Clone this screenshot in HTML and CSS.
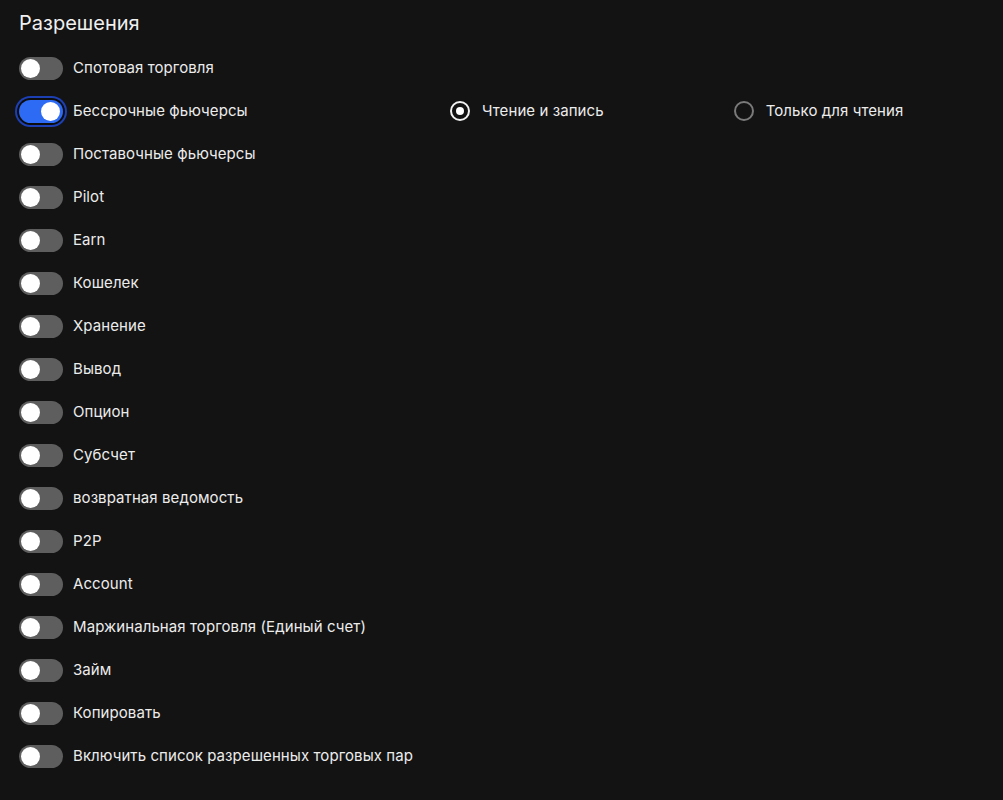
FILE: index.html
```html
<!DOCTYPE html>
<html lang="ru">
<head>
<meta charset="utf-8">
<link rel="stylesheet" href="styles.css">
</head>
<body>
<div class="page">
  <h1 class="title">Разрешения</h1>
  <ul class="list">
    <li class="row"><span class="toggle"></span><span class="label">Спотовая торговля</span></li>
    <li class="row">
      <span class="toggle on"></span><span class="label">Бессрочные фьючерсы</span>
      <div class="radios">
        <span class="radio checked"><span class="dot"></span></span><span class="rlabel">Чтение и запись</span>
        <span class="radio gap"></span><span class="rlabel">Только для чтения</span>
      </div>
    </li>
    <li class="row"><span class="toggle"></span><span class="label">Поставочные фьючерсы</span></li>
    <li class="row"><span class="toggle"></span><span class="label">Pilot</span></li>
    <li class="row"><span class="toggle"></span><span class="label">Earn</span></li>
    <li class="row"><span class="toggle"></span><span class="label">Кошелек</span></li>
    <li class="row"><span class="toggle"></span><span class="label">Хранение</span></li>
    <li class="row"><span class="toggle"></span><span class="label">Вывод</span></li>
    <li class="row"><span class="toggle"></span><span class="label">Опцион</span></li>
    <li class="row"><span class="toggle"></span><span class="label">Субсчет</span></li>
    <li class="row"><span class="toggle"></span><span class="label">возвратная ведомость</span></li>
    <li class="row"><span class="toggle"></span><span class="label">P2P</span></li>
    <li class="row"><span class="toggle"></span><span class="label">Account</span></li>
    <li class="row"><span class="toggle"></span><span class="label">Маржинальная торговля (Единый счет)</span></li>
    <li class="row"><span class="toggle"></span><span class="label">Займ</span></li>
    <li class="row"><span class="toggle"></span><span class="label">Копировать</span></li>
    <li class="row"><span class="toggle"></span><span class="label">Включить список разрешенных торговых пар</span></li>
  </ul>
</div>
</body>
</html>
```

FILE: styles.css
```css
html, body {
  margin: 0;
  padding: 0;
  background: #131313;
}
body {
  font-family: Inter, "Noto Sans", sans-serif;
  color: #ececec;
  width: 1003px;
  height: 800px;
  overflow: hidden;
}
.page {
  padding: 9px 0 0 19px;
}
.title {
  margin: 0 0 19px 0;
  font-size: 20px;
  font-weight: 400;
  line-height: 28px;
  color: #f0f0f0;
}
.list {
  list-style: none;
  margin: 0;
  padding: 0;
  display: flex;
  flex-direction: column;
  gap: 19px;
}
.row {
  display: flex;
  align-items: center;
  height: 24px;
}
.toggle {
  position: relative;
  width: 44px;
  height: 23px;
  border-radius: 12px;
  background: #5e5e5e;
  flex: none;
}
.toggle::after {
  content: "";
  position: absolute;
  left: 2px;
  top: 2px;
  width: 19px;
  height: 19px;
  border-radius: 50%;
  background: #ffffff;
}
.toggle.on {
  background: #2d6bf4;
  box-shadow: 0 0 0 2px #0d0d0d, 0 0 0 4px #1c3fb3;
}
.toggle.on::after {
  left: auto;
  right: 3px;
}
.label {
  margin-left: 10px;
  font-size: 15px;
  line-height: 20px;
  letter-spacing: 0.08px;
  white-space: nowrap;
  width: 377px;
}
.radios {
  display: flex;
  align-items: center;
}
.radio {
  width: 20px;
  height: 20px;
  box-sizing: border-box;
  border-radius: 50%;
  border: 2px solid #f2f2f2;
  display: flex;
  align-items: center;
  justify-content: center;
  flex: none;
}
.radio.gap {
  border-color: #7a7a7a;
  margin-left: 130px;
}
.dot {
  width: 8px;
  height: 8px;
  border-radius: 50%;
  background: #ffffff;
}
.rlabel {
  margin-left: 12px;
  font-size: 15px;
  line-height: 20px;
  letter-spacing: 0.08px;
  white-space: nowrap;
}
```
